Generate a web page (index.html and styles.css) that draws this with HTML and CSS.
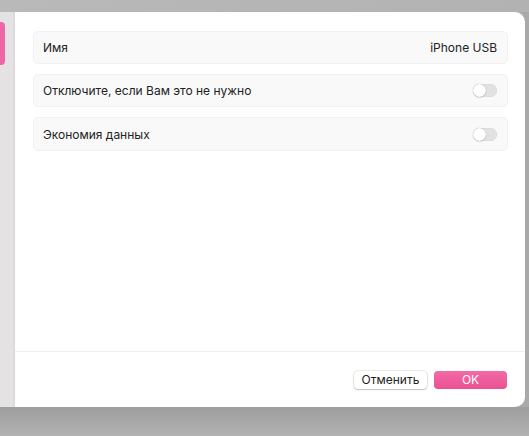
FILE: index.html
```html
<!DOCTYPE html>
<html lang="ru">
<head>
<meta charset="utf-8">
<link rel="stylesheet" href="styles.css">
</head>
<body>
<div class="screen">
  <div class="topband"></div>
  <div class="middle">
    <div class="sidebar"><div class="tab"></div></div>
    <div class="dialog">
      <div class="content">
        <div class="row">
          <span class="label">Имя</span>
          <span class="value">iPhone USB</span>
        </div>
        <div class="row">
          <span class="label">Отключите, если Вам это не нужно</span>
          <span class="toggle"><span class="knob"></span></span>
        </div>
        <div class="row">
          <span class="label">Экономия данных</span>
          <span class="toggle"><span class="knob"></span></span>
        </div>
      </div>
      <div class="footer">
        <button class="btn cancel">Отменить</button>
        <button class="btn ok">OK</button>
      </div>
    </div>
    <div class="rightgap"></div>
  </div>
  <div class="bottom"></div>
</div>
</body>
</html>
```
FILE: styles.css
```css
html, body {
  margin: 0;
  padding: 0;
  width: 529px;
  height: 436px;
  overflow: hidden;
  font-family: Inter, "Liberation Sans", sans-serif;
  background: #ababab;
}
.screen {
  display: flex;
  flex-direction: column;
  width: 529px;
  height: 436px;
}
.topband {
  height: 12px;
  background: linear-gradient(to right, #b9b9b9, #b2b2b2);
  flex: none;
}
.middle {
  display: flex;
  height: 395px;
  flex: none;
}
.sidebar {
  width: 13px;
  background: #e4e2e3;
  border-right: 2px solid #dcdadb;
  padding-top: 10px;
  box-sizing: content-box;
}
.tab {
  width: 5px;
  height: 43px;
  background: #ef66a6;
  border-radius: 0 4px 4px 0;
}
.dialog {
  flex: 1;
  background: #fff;
  border-radius: 0 10px 10px 0;
  display: flex;
  flex-direction: column;
}
.rightgap {
  width: 4px;
  background: #a9a9a9;
}
.content {
  flex: 1;
  padding: 19px 17px 0 18px;
  display: flex;
  flex-direction: column;
  gap: 10px;
  border-bottom: 1px solid #efefef;
}
.row {
  height: 31px;
  border: 1px solid #f1f1f1;
  background: #f9f9f9;
  border-radius: 5px;
  display: flex;
  align-items: center;
  justify-content: space-between;
  padding: 0 10px 0 9px;
  font-size: 12px;
  color: #222;
}
.row:nth-child(3) { height: 32px; }
.toggle {
  width: 24px;
  height: 13px;
  border-radius: 7px;
  background: #e2e2e2;
  position: relative;
  box-shadow: inset 0 0 0 0.5px #d8d8d8;
}
.knob {
  position: absolute;
  left: 0;
  top: 0;
  width: 13px;
  height: 13px;
  border-radius: 50%;
  background: #fff;
  box-shadow: 0 0 1px rgba(0,0,0,0.35), 0 1px 1px rgba(0,0,0,0.1);
}
.footer {
  height: 55px;
  display: flex;
  justify-content: flex-end;
  align-items: flex-start;
  gap: 7px;
  padding: 19px 18px 0 0;
  box-sizing: border-box;
}
.btn {
  width: 73px;
  height: 18px;
  border: none;
  border-radius: 4px;
  font-family: Inter, "Liberation Sans", sans-serif;
  font-size: 12px;
  padding: 0;
  line-height: 18px;
}
.cancel {
  background: #fff;
  color: #222;
  box-shadow: 0 0 0 0.5px rgba(0,0,0,0.15), 0 1px 1.5px rgba(0,0,0,0.2);
}
.ok {
  background: linear-gradient(#f26aa6, #ea5292);
  color: #fff;
}
.bottom {
  flex: 1;
  background: linear-gradient(#9e9e9e, #b2b2b2);
}
```
